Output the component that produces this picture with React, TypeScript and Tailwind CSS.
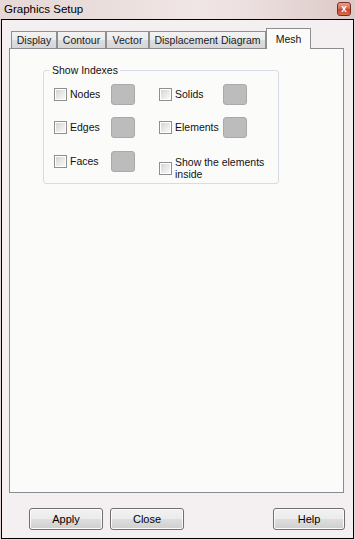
import React from "react";

function Check() {
  return (
    <div className="w-[13px] h-[13px] shrink-0 border border-[#8e8f8f] bg-white p-[1px]">
      <div className="w-full h-full bg-[linear-gradient(135deg,#d4d4d4_0%,#e8e8e8_50%,#f8f8f8_100%)]" />
    </div>
  );
}

function Swatch() {
  return (
    <div className="w-[24px] h-[21px] shrink-0 rounded-[3px] border border-[#a9a9a9] bg-[#bcbcbc]" />
  );
}

function Btn({ label, cls }: { label: string; cls: string }) {
  return (
    <div
      className={
        "h-[22px] flex items-center justify-center rounded-[3px] border border-[#707070] bg-[linear-gradient(180deg,#f2f2f2_0%,#ebebeb_48%,#dddddd_52%,#cfcfcf_100%)] shadow-[inset_0_0_0_1px_#fbfbfb] text-[11px] text-black " +
        cls
      }
    >
      {label}
    </div>
  );
}

function Tab({ label, w }: { label: string; w: string }) {
  return (
    <div
      className={
        "h-[17px] mb-[1px] flex items-center justify-center border border-b-0 border-[#8e8f8f] bg-[linear-gradient(180deg,#f3f3f3_0%,#ebebeb_50%,#dedede_51%,#d6d6d6_100%)] text-[#1b1b1b] " +
        w
      }
    >
      <span className="pt-[1px]">{label}</span>
    </div>
  );
}

export default function App() {
  return (
    <div className="w-[355px] h-[540px] flex flex-col bg-[#e6d8d6] font-['Liberation_Sans',Arial,sans-serif] text-[10.5px] text-[#111]">
      <div className="h-[19px] shrink-0 flex items-center justify-between pl-[4px] pr-[4px] bg-[linear-gradient(90deg,#e5d8d6_0%,#eadedc_30%,#f1e6e6_55%,#ecdfdf_70%,#dbc9c6_100%)]">
        <span className="text-[11.5px] leading-none text-black">Graphics Setup</span>
        <div className="w-[14px] h-[14px] mb-[1px] rounded-[3px] border border-[#7d2d1f] bg-[linear-gradient(180deg,#eaa08a_0%,#d4674b_50%,#c1432a_52%,#d9704f_100%)] flex items-center justify-center text-white text-[10px] font-bold leading-none">
          x
        </div>
      </div>
      <div className="flex-1 mx-[1px] mb-[1px] border border-black bg-[#f4f0f2] flex flex-col pl-[7px] pr-[9px] pt-[8px] pb-[8px]">
        <div className="h-[21px] shrink-0 -mb-[1px] relative z-10 flex items-end pl-[2px]">
          <Tab label="Display" w="w-[46px]" />
          <Tab label="Contour" w="w-[49px]" />
          <Tab label="Vector" w="w-[43px]" />
          <Tab label="Displacement Diagram" w="w-[117px]" />
          <div className="w-[45px] h-[21px] flex items-start justify-center pt-[3px] border border-b-0 border-[#8e8f8f] bg-[#fbfcfa] text-[#111]">
            Mesh
          </div>
        </div>
        <div className="flex-1 border border-[#898d91] bg-[#fbfcfa] pl-[33px] pt-[21px]">
          <div className="relative w-[236px] h-[114px] rounded-[3px] border border-[#d5dde3] pl-[10px] pt-[13px] flex flex-col">
            <span className="absolute left-[6px] top-[-7px] px-[2px] bg-[#fbfcfa] leading-[13px] text-[#111]">
              Show Indexes
            </span>
            <div className="flex items-center h-[21px]">
              <div className="w-[105px] flex items-center">
                <Check />
                <span className="ml-[3px] w-[41px]">Nodes</span>
                <Swatch />
              </div>
              <div className="flex items-center">
                <Check />
                <span className="ml-[3px] w-[48px]">Solids</span>
                <Swatch />
              </div>
            </div>
            <div className="flex items-center h-[21px] mt-[12px]">
              <div className="w-[105px] flex items-center">
                <Check />
                <span className="ml-[3px] w-[41px]">Edges</span>
                <Swatch />
              </div>
              <div className="flex items-center">
                <Check />
                <span className="ml-[3px] w-[48px]">Elements</span>
                <Swatch />
              </div>
            </div>
            <div className="flex items-start mt-[13px]">
              <div className="w-[105px] h-[21px] flex items-center">
                <Check />
                <span className="ml-[3px] w-[41px]">Faces</span>
                <Swatch />
              </div>
              <div className="flex items-center pt-[5px]">
                <Check />
                <span className="ml-[3px] leading-[12px]">
                  Show the elements
                  <br />
                  inside
                </span>
              </div>
            </div>
          </div>
        </div>
        <div className="h-[22px] shrink-0 mt-[15px] flex items-center">
          <Btn label="Apply" cls="ml-[20px] w-[74px]" />
          <Btn label="Close" cls="ml-[7px] w-[74px]" />
          <Btn label="Help" cls="ml-auto mr-[-1px] w-[72px]" />
        </div>
      </div>
    </div>
  );
}
